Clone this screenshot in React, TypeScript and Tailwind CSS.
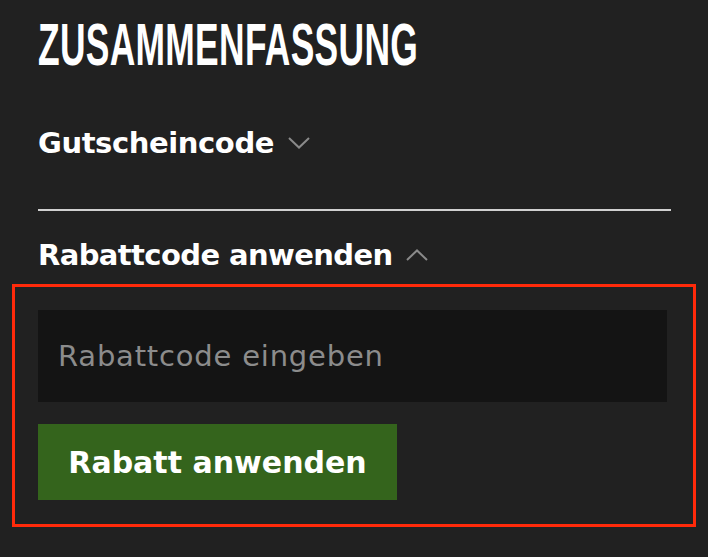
import React from 'react';

const Chevron = ({ up }: { up?: boolean }) => (
  <svg width="22" height="12" viewBox="0 0 22 12" fill="none" className="shrink-0">
    <path
      d={up ? 'M1 11L11 1.5L21 11' : 'M1 1L11 10.5L21 1'}
      stroke="#8a8a8a"
      strokeWidth="2"
    />
  </svg>
);

export default function App() {
  return (
    <div className="min-h-[557px] w-[708px] bg-[#212121] font-['DejaVu_Sans',sans-serif] text-white">
      <div className="px-[38px] pt-[22px]">
        <h1 className="inline-block origin-left scale-x-[0.59] whitespace-nowrap font-['Liberation_Sans_Narrow','Liberation_Sans',sans-serif] text-[60px] font-bold leading-[46px] tracking-[0.5px]">
          ZUSAMMENFASSUNG
        </h1>

        <div className="mt-[55px] flex items-center gap-[14px]">
          <span className="text-[29px] leading-[32px] font-bold tracking-[-0.4px]">Gutscheincode</span>
          <Chevron />
        </div>

        <div className="mt-[50px] mr-[-1px] h-[2px] bg-[#d0d0d0]" />

        <div className="mt-[28px] flex items-center gap-[13px]">
          <span className="text-[29px] leading-[32px] font-bold tracking-[-0.6px]">Rabattcode anwenden</span>
          <Chevron up />
        </div>
      </div>

      <div className="mx-[12px] mt-[13px] w-[684px] border-[3px] border-[#ff2a0a] pt-[23px] pb-[24px] pl-[23px] pr-[25px]">
        <input
          type="text"
          placeholder="Rabattcode eingeben"
          className="block h-[92px] w-[629px] bg-[#141414] px-[20px] text-[29px] tracking-[0.8px] text-white outline-none placeholder:text-[#8c8c8c]"
        />
        <button className="mt-[22px] h-[76px] w-[359px] bg-[#34641c] text-[30px] font-bold text-white">
          Rabatt anwenden
        </button>
      </div>
    </div>
  );
}
